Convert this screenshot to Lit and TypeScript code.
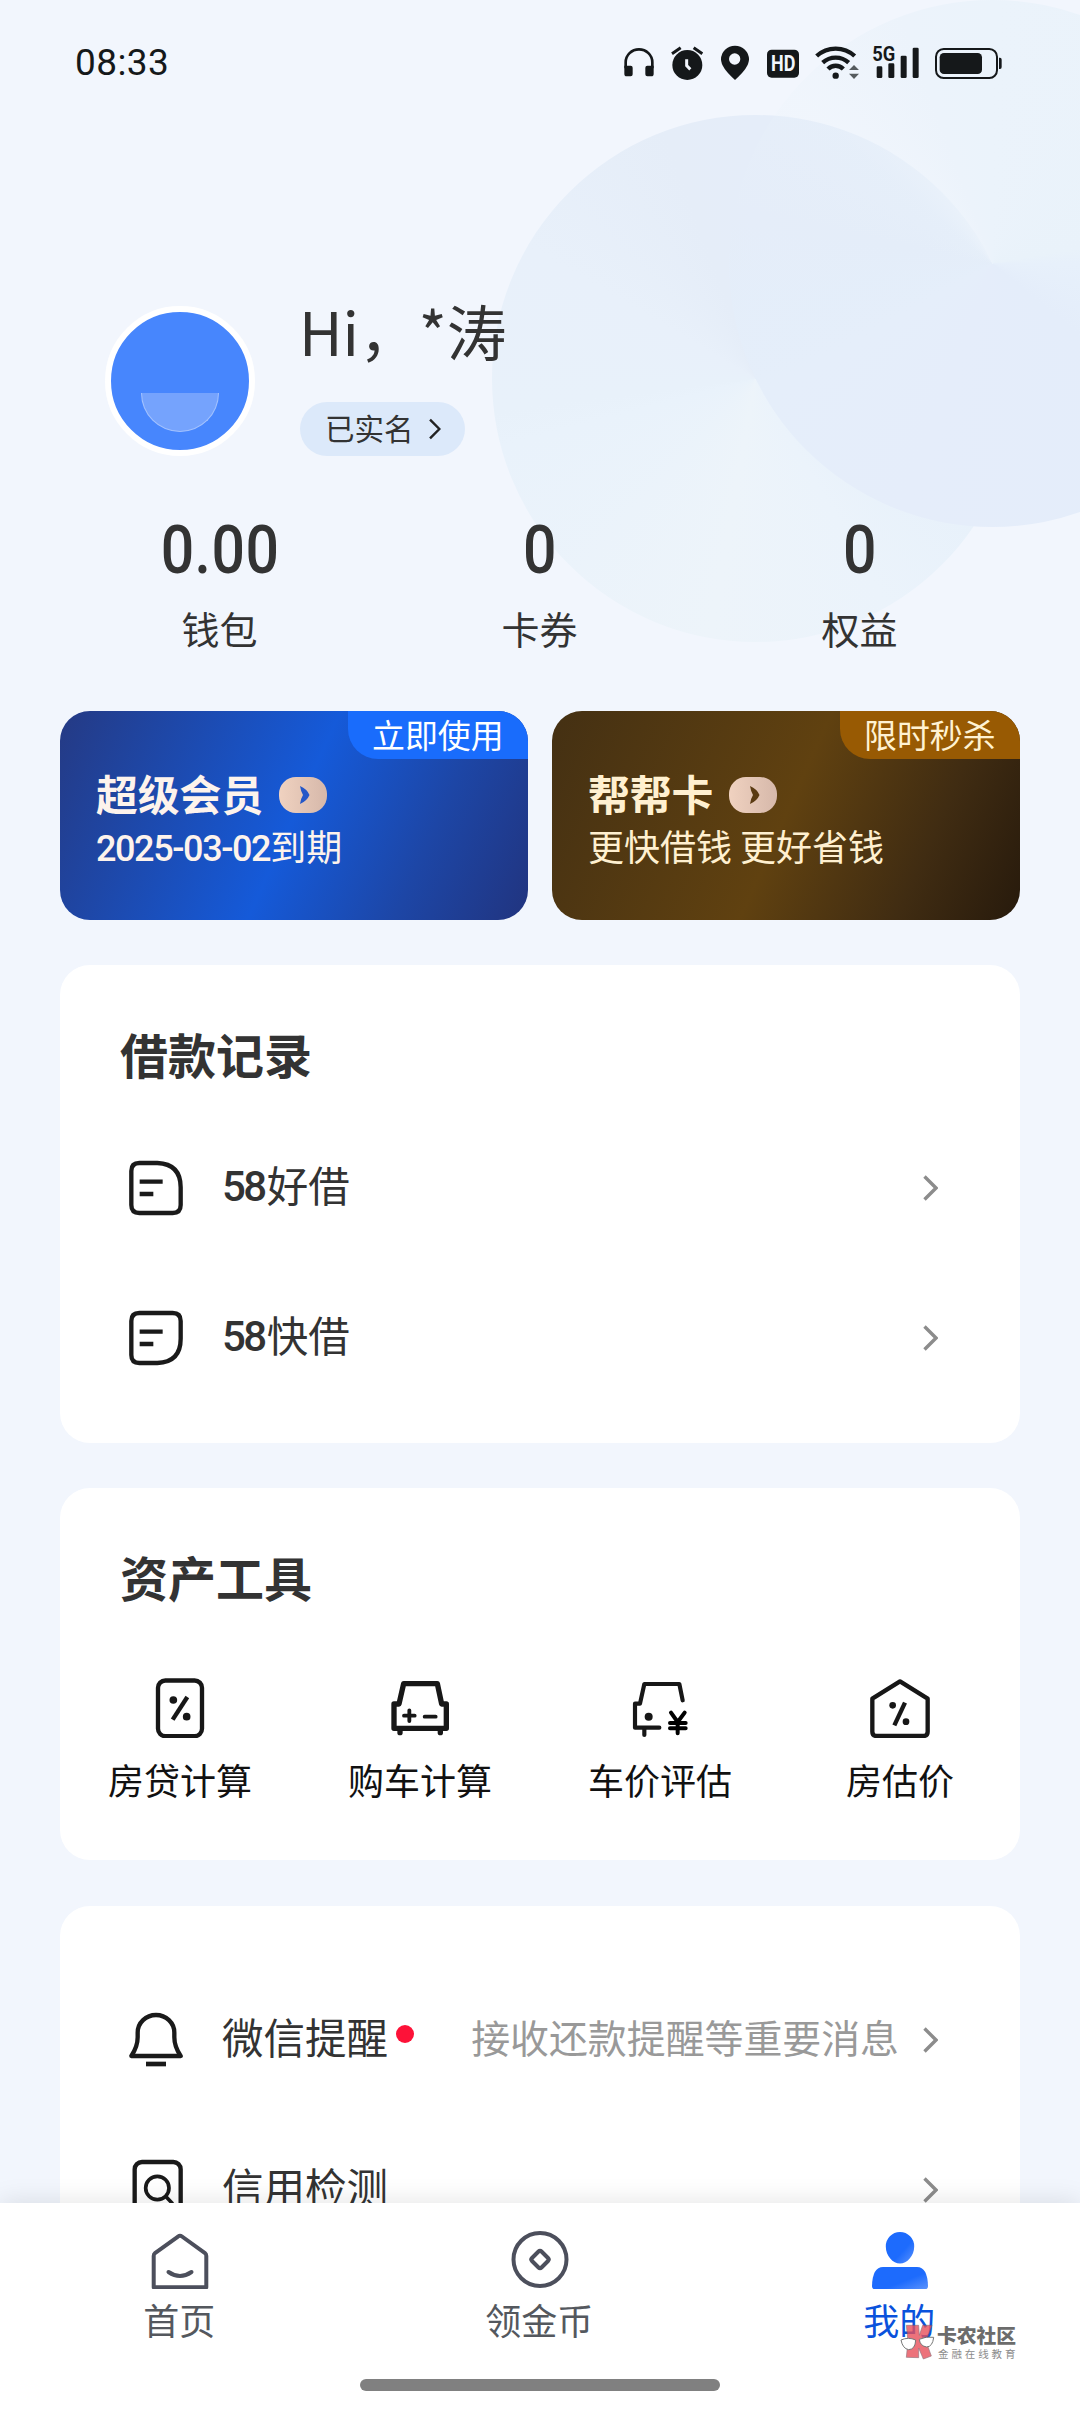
import { LitElement, html, svg, css, TemplateResult } from "lit";
import { customElement, property } from "lit/decorators.js";

const chevron = (cls: string) => html`
  <svg class=${cls} viewBox="0 0 16 26" fill="none" stroke="currentColor">
    <path d="M2.500 1.500 L14 13 L2.500 24.500" />
  </svg>
`;

const docIcon = svg`
  <g fill="none" stroke="#1a1a1a" stroke-width="13">
    <path d="M118 489H172Q242 492 242 562V615Q242 639 218 639H118Q94 639 94 615V513Q94 489 118 489Z"/>
    <path d="M119 545H188M119 582H160"/>
  </g>`;

const docFlipIcon = svg`
  <g fill="none" stroke="#1a1a1a" stroke-width="13">
    <path d="M118 639H172Q242 636 242 566V513Q242 489 218 489H118Q94 489 94 513V615Q94 639 118 639Z"/>
    <path d="M119 545H188M119 582H160"/>
  </g>`;

const bellIcon = svg`
  <g transform="translate(0 384)" fill="none" stroke="#1a1a1a" stroke-width="13" stroke-linejoin="round">
    <path d="M94 228Q113 200 113 172V158A55 53 0 0 1 223 158V172Q223 200 242 228Z"/>
    <path d="M138 252H198" stroke-width="14"/>
  </g>`;

const searchIcon = svg`
  <g transform="translate(0 -66)" fill="none" stroke="#1a1a1a" stroke-width="13">
    <rect x="104" y="546" width="138" height="168" rx="22"/>
    <circle cx="172" cy="624" r="35" stroke-width="11"/>
    <path d="M196 648L218 671" stroke-width="11"/>
  </g>`;

const tools: { label: string; icon: TemplateResult }[] = [
  {
    label: "房贷计算",
    icon: svg`<g fill="none" stroke="#171717" stroke-width="13">
      <rect x="24" y="7.500" width="132" height="167" rx="22"/>
      <path d="M112 57L68 125"/>
      <circle cx="70" cy="66" r="11.500" fill="#171717" stroke="none"/>
      <circle cx="110" cy="116" r="11.500" fill="#171717" stroke="none"/></g>`,
  },
  {
    label: "购车计算",
    icon: svg`<g fill="none" stroke="#171717" stroke-width="16" stroke-linejoin="round" stroke-linecap="round">
      <path d="M12 78H27L41 17H142L155 78H169V151H12Z"/>
      <path d="M30 156V164M151 156V164"/>
      <path d="M42 113H74M58 97V129M104 116H137" stroke-width="11.500"/></g>`,
  },
  {
    label: "车价评估",
    icon: svg`<g fill="none" stroke="#171717" stroke-width="12.500" stroke-linejoin="round" stroke-linecap="round">
      <path d="M158 67L148 18H43L30 77H15V149H88"/>
      <path d="M43 150V171"/>
      <circle cx="56" cy="116" r="12" fill="#171717" stroke="none"/>
      <path d="M123 104L143 132L164 104M143 132V166M120 135H167M120 151H167" stroke="#000" stroke-width="12"/></g>`,
  },
  {
    label: "房估价",
    icon: svg`<g fill="none" stroke="#171717" stroke-width="13" stroke-linejoin="round">
      <path d="M90 10L173 62V161Q173 174 160 174H20Q7 174 7 161V62Z"/>
      <path d="M105 74L73 142"/>
      <circle cx="68" cy="82" r="10" fill="#171717" stroke="none"/>
      <circle cx="108" cy="131" r="10" fill="#171717" stroke="none"/></g>`,
  },
];

@customElement("status-bar")
class StatusBar extends LitElement {
  static styles = css`
    :host {
      display: flex;
      justify-content: space-between;
      height: 124px;
      padding: 0 77px 2px 75px;
      align-items: center;
      color: #15181a;
      font-family: Roboto, sans-serif;
    }
    .time { font-size: 37px; line-height: 44px; letter-spacing: 0.4px; padding-top: 2px; }
    .icons { display: flex; }
    .icons svg { height: 42px; display: block; }
    .w43 { width: 43px; }
    .w48 { width: 48px; }
    .w47 { width: 47px; }
    .w58 { width: 58px; }
    .w64 { width: 64px; }
    .w75 { width: 75px; }
    text { font-family: Roboto, sans-serif; font-weight: 700; }
  `;
  render() {
    return html`
      <div class="time">08:33</div>
      <div class="icons">
        <svg class="w43" viewBox="60 60 129 126">
          <path d="M77 142V124A40 39 0 0 1 157 124V142" fill="none" stroke="currentColor" stroke-width="8"/>
          <path d="M73 134H92Q98 134 98 140V160Q98 166 92 166H80Q73 166 73 158ZM161 134H142Q136 134 136 140V160Q136 166 142 166H154Q161 166 161 158Z" fill="currentColor"/>
        </svg>
        <svg class="w48" viewBox="189 60 144 126">
          <circle cx="262" cy="132" r="45" fill="currentColor"/>
          <path d="M216 98L242 80M281 80L307 98" stroke="currentColor" stroke-width="9"/>
          <path d="M260 115V134L271 145" fill="none" stroke="#f2f6fd" stroke-width="9"/>
        </svg>
        <svg class="w47" viewBox="333 60 141 126">
          <path d="M405 177Q363 140 363 115A42 41 0 0 1 447 115Q447 140 405 177Z" fill="currentColor"/>
          <circle cx="404" cy="114" r="17" fill="#f2f6fd"/>
        </svg>
        <svg class="w48" viewBox="474 60 144 126">
          <rect x="501" y="86" width="96" height="84" rx="14" fill="currentColor"/>
          <text x="513" y="151" font-size="64" textLength="73" lengthAdjust="spacingAndGlyphs" fill="#f2f6fd">HD</text>
        </svg>
        <svg class="w58" viewBox="618 60 174 126">
          <g fill="none" stroke="currentColor" stroke-width="13">
            <path d="M650 105A84 84 0 0 1 764 105"/>
            <path d="M668 125A58 58 0 0 1 746 125"/>
            <path d="M684 144A32 32 0 0 1 730 144"/>
          </g>
          <circle cx="707" cy="164" r="9.5" fill="currentColor"/>
          <path d="M747 147L762 132L777 147ZM747 158L762 174L777 158Z" fill="#555b5e"/>
        </svg>
        <svg class="w64" viewBox="792 60 192 126">
          <text x="817" y="121" font-size="62" textLength="69" lengthAdjust="spacingAndGlyphs" fill="currentColor">5G</text>
          <g fill="currentColor">
            <rect x="830" y="136" width="17" height="35" rx="4"/>
            <rect x="865" y="127" width="18" height="44" rx="4"/>
            <rect x="902" y="104" width="18" height="67" rx="4"/>
            <rect x="938" y="80" width="18" height="91" rx="4"/>
          </g>
        </svg>
        <svg class="w75" viewBox="984 60 225 126">
          <rect x="1008" y="84" width="183" height="87" rx="23" fill="none" stroke="currentColor" stroke-width="6"/>
          <rect x="1019" y="96" width="127" height="63" rx="13" fill="currentColor"/>
          <path d="M1197 110H1200Q1205 110 1205 116V138Q1205 144 1200 144H1197Z" fill="currentColor"/>
        </svg>
      </div>
    `;
  }
}

@customElement("member-card")
class MemberCard extends LitElement {
  @property() heading = "";
  @property() tag = "";
  @property() tone = "blue";
  static styles = css`
    :host { flex: 1; display: block; }
    .card {
      height: 209px;
      border-radius: 30px;
      overflow: hidden;
      display: flex;
      flex-direction: column;
      box-sizing: border-box;
    }
    .blue {
      color: #fdf3ec;
      background: linear-gradient(114deg, #243b87 2%, #155ad9 50%, #1d46a6 76%, #21347f 100%);
      --tag: #196cfc;
      --tagtext: #fff;
      --mark: #2457c8;
    }
    .gold {
      color: #fff0d0;
      background: linear-gradient(114deg, #443013 0%, #604110 50%, #402c12 78%, #271a0c 100%);
      --tag: #985a03;
      --tagtext: #fff2d2;
      --mark: #5b3b12;
    }
    .tag {
      align-self: flex-end;
      width: 180px;
      height: 48px;
      box-sizing: border-box;
      padding-left: 24px;
      font-size: 32.9px;
      line-height: 45px;
      white-space: nowrap;
      border-bottom-left-radius: 30px;
      background: var(--tag);
      color: var(--tagtext);
    }
    .title {
      display: flex;
      align-items: center;
      gap: 16px;
      height: 50px;
      margin-top: 11px;
      padding-left: 36px;
      font-size: 41.8px;
      line-height: 50px;
      font-weight: 700;
    }
    .title span { padding-bottom: 5px; }
    .pill { width: 48px; height: 36px; }
    .desc {
      padding-left: 36px;
      font-size: 36px;
      line-height: 50px;
      white-space: nowrap;
    }
  `;
  render() {
    return html`
      <div class="card ${this.tone}">
        <div class="tag">${this.tag}</div>
        <div class="title">
          <span>${this.heading}</span>
          <svg class="pill" viewBox="0 0 48 36">
            <defs>
              <linearGradient id="g"><stop offset="0" stop-color="#f0d2c0"/><stop offset="1" stop-color="#d6b8aa"/></linearGradient>
            </defs>
            <rect width="48" height="36" rx="17" fill="url(#g)"/>
            <path d="M21 9Q28 12 30.5 18Q28 24 21 27Q22 21 24 18Q22 15 21 9Z" fill="var(--mark)"/>
          </svg>
        </div>
        <div class="desc"><slot></slot></div>
      </div>
    `;
  }
}

@customElement("tab-bar")
class TabBar extends LitElement {
  static styles = css`
    :host {
      display: grid;
      grid-template-columns: repeat(3, 360px);
      grid-template-rows: 176px 12px;
      height: 209px;
      background: #fff;
      box-shadow: 0 -2px 24px rgba(0, 0, 0, 0.1);
    }
    .tab {
      display: flex;
      flex-direction: column;
      align-items: center;
      padding-top: 26px;
      color: #54585e;
      font-size: 36px;
      line-height: 50px;
    }
    .tab svg { width: 60px; height: 60px; margin-bottom: 5px; }
    .tab span { padding-right: 1.5px; }
    .on { color: #0a52dc; }
    .handle {
      grid-column: 2;
      height: 12px;
      border-radius: 6px;
      background: #808080;
    }
  `;
  render() {
    return html`
      <div class="tab">
        <svg viewBox="150 2229 60 60" fill="none" stroke="#4c4f5c" stroke-width="4" stroke-linejoin="round" stroke-linecap="round">
          <path d="M178 2236.5Q180 2235 182 2236.5L205 2253Q206.300 2254 206.300 2256V2287.200H153.700V2256Q153.700 2254 155 2253Z"/>
          <path d="M168.500 2272Q180 2280 191.500 2272"/>
        </svg>
        <span>首页</span>
      </div>
      <div class="tab">
        <svg viewBox="510 2229 60 60" fill="none" stroke="#4c4f5c" stroke-width="4" stroke-linejoin="round">
          <circle cx="540" cy="2259.500" r="26.500"/>
          <path d="M538.500 2251.500Q540 2250 541.500 2251.500L548 2258Q549.500 2259.500 548 2261L541.500 2267.500Q540 2269 538.500 2267.500L532 2261Q530.500 2259.500 532 2258Z"/>
        </svg>
        <span>领金币</span>
      </div>
      <div class="tab on">
        <svg viewBox="870 2229 60 60">
          <defs>
            <linearGradient id="p" x1="0" y1="0" x2="1" y2="1">
              <stop offset="0.600" stop-color="#1d6bfd"/><stop offset="1" stop-color="#5c93fc"/>
            </linearGradient>
          </defs>
          <path d="M900 2232A14.200 14.200 0 0 1 914.200 2246.500C914.200 2256 907 2263.500 900 2263.500S885.800 2256 885.800 2246.500A14.200 14.200 0 0 1 900 2232Z" fill="url(#p)"/>
          <path d="M883 2267H917Q927.500 2267 928 2286Q928 2289.300 925 2289.300H875Q872 2289.300 872 2286Q872.500 2267 883 2267Z" fill="url(#p)"/>
        </svg>
        <span>我的</span>
      </div>
      <div class="handle"></div>
    `;
  }
}

@customElement("app-root")
class AppRoot extends LitElement {
  static styles = css`
    :host {
      display: block;
      position: relative;
      width: 1080px;
      height: 2412px;
      overflow: hidden;
      background: #f2f6fd;
      color: #333;
      font-family: "Noto Sans CJK SC", sans-serif;
    }
    .disc {
      position: absolute;
      width: 527px;
      height: 527px;
      border-radius: 50%;
    }
    .disc-a {
      left: 492px;
      top: 115px;
      background: conic-gradient(#e5edf9 0deg, #e4edf9 50deg, #e6f0fa 110deg, #ebf3fb 150deg, #edf4fa 190deg, #e9f2fb 255deg, #e8f1fa 263deg, #e8f0fa 300deg, #e5edf8 340deg, #e5edf9 360deg);
    }
    .disc-b {
      left: 729px;
      top: 0;
      background: conic-gradient(#ebf3fb 0deg, #e9f2fa 80deg, #e7f0fb 90deg, #e4edfa 130deg, #e5edfa 200deg, #e5eefa 240deg, #e4eefab0 262deg, #e5eff900 280deg, #eaf3fa40 310deg, #ecf3fb 340deg, #ebf3fb 360deg);
    }
    .page { position: relative; display: flex; flex-direction: column; }
    .profile { display: flex; padding: 180px 0 0 105px; gap: 45px; height: 150px; }
    .avatar {
      box-sizing: border-box;
      width: 150px;
      height: 150px;
      border: 6px solid #fff;
      border-radius: 50%;
      background: #4786fd;
      display: flex;
      justify-content: center;
    }
    .smile {
      margin-top: 81px;
      box-sizing: border-box;
      width: 78px;
      height: 39px;
      border-radius: 0 0 39px 39px;
      background: #75a3fd;
      border: 1.5px solid #a3c2fe;
      border-top: none;
    }
    .who { display: flex; flex-direction: column; align-items: flex-start; }
    .hi { font-size: 59.8px; line-height: 48px; height: 60px; margin-left: -1px; white-space: nowrap; }
    .verified {
      margin-top: 36px;
      width: 165px;
      height: 54px;
      box-sizing: border-box;
      padding: 0 24px 0 25px;
      border-radius: 27px;
      background: #dce9fa;
      display: flex;
      align-items: center;
      justify-content: space-between;
      font-size: 29.5px;
      line-height: 50px;
    }
    .verified span { padding-bottom: 4px; }
    .go-s { width: 13px; height: 22px; stroke-width: 3; color: #222; }
    .stats { display: grid; grid-template-columns: repeat(3, 1fr); padding: 62px 60px 0; text-align: center; }
    .num {
      font: 500 67px/64px Roboto, sans-serif;
      transform: scaleX(0.88);
      letter-spacing: 0.5px;
    }
    .stat { font-size: 38px; line-height: 50px; margin: 21px 1px 2px 0; }
    .members { display: flex; gap: 24px; padding: 56px 60px 0; }
    .din { font-family: Roboto, sans-serif; font-weight: 500; letter-spacing: -1.4px; }
    .panel {
      margin: 45px 60px 0;
      border-radius: 30px;
      background: #fff;
      box-sizing: border-box;
    }
    .loans { height: 478px; padding-top: 58px; }
    .assets { height: 372px; padding-top: 58px; }
    .more { height: 600px; padding-top: 59px; margin-top: 46px; }
    .heading { margin: 0; padding-left: 60px; font-size: 48px; line-height: 60px; font-weight: 700; }
    .loans .heading { margin-bottom: 30px; }
    .row {
      display: flex;
      align-items: center;
      height: 150px;
      padding: 0 82px 0 69px;
      font-size: 41.5px;
      line-height: 60px;
      white-space: nowrap;
    }
    .row span { padding-bottom: 8px; }
    .row-icon { width: 54px; height: 54px; margin-right: 39px; overflow: visible; }
    .row .din { font-size: 42px; letter-spacing: -2.5px; margin-right: 2px; padding-bottom: 3px; }
    .dot { width: 18px; height: 18px; border-radius: 50%; background: #fd1238; margin: 0 0 12px 8px; }
    .hint { margin-left: auto; margin-right: 23px; color: #999; font-size: 38.9px; }
    .go { width: 16px; height: 26px; stroke-width: 3.4; color: #8c8c8c; }
    .push { margin-left: auto; }
    .tools { display: grid; grid-template-columns: repeat(4, 1fr); margin-top: 72px; color: #111; }
    .tool { display: flex; flex-direction: column; align-items: center; font-size: 36px; line-height: 50px; }
    .tool svg { width: 60px; height: 60px; margin-bottom: 16px; }
    .tabs { position: absolute; left: 0; right: 0; bottom: 0; }
    .stamp {
      position: absolute;
      left: 900px;
      top: 2324px;
      display: flex;
      gap: 2px;
      color: #6c6c6c;
    }
    .stamp svg { width: 35px; height: 37px; opacity: 0.8; }
    .stamp-name { font-size: 19.8px; line-height: 22px; font-weight: 900; white-space: nowrap; }
    .stamp-sub { font-size: 10.5px; line-height: 15px; letter-spacing: 2.9px; color: #8c8c8c; white-space: nowrap; padding-left: 1px; }
  `;

  private row(icon: TemplateResult, content: TemplateResult, hint?: string) {
    return html`
      <div class="row">
        <svg class="row-icon" viewBox="87 483 162 162">${icon}</svg>
        ${content}
        ${hint ? html`<span class="hint">${hint}</span>` : html`<span class="push"></span>`}
        ${chevron("go")}
      </div>
    `;
  }

  render() {
    return html`
      <div class="disc disc-a"></div>
      <div class="disc disc-b"></div>
      <div class="page">
        <status-bar></status-bar>
        <div class="profile">
          <div class="avatar"><div class="smile"></div></div>
          <div class="who">
            <div class="hi">Hi，*涛</div>
            <div class="verified"><span>已实名</span>${chevron("go-s")}</div>
          </div>
        </div>
        <div class="stats">
          ${[["0.00", "钱包"], ["0", "卡券"], ["0", "权益"]].map(
            ([n, l]) => html`<div><div class="num">${n}</div><div class="stat">${l}</div></div>`
          )}
        </div>
        <div class="members">
          <member-card heading="超级会员" tag="立即使用" tone="blue"><span class="din">2025-03-02</span>到期</member-card>
          <member-card heading="帮帮卡" tag="限时秒杀" tone="gold">更快借钱 更好省钱</member-card>
        </div>
        <section class="panel loans">
          <h2 class="heading">借款记录</h2>
          ${this.row(docIcon, html`<span class="din">58</span><span>好借</span>`)}
          ${this.row(docFlipIcon, html`<span class="din">58</span><span>快借</span>`)}
        </section>
        <section class="panel assets">
          <h2 class="heading">资产工具</h2>
          <div class="tools">
            ${tools.map((t) => html`<div class="tool"><svg viewBox="0 0 180 180">${t.icon}</svg>${t.label}</div>`)}
          </div>
        </section>
        <section class="panel more">
          ${this.row(bellIcon, html`<span>微信提醒</span><i class="dot"></i>`, "接收还款提醒等重要消息")}
          ${this.row(searchIcon, html`<span>信用检测</span>`)}
        </section>
      </div>
      <tab-bar class="tabs"></tab-bar>
      <div class="stamp">
        <svg viewBox="0 0 105 111">
          <path d="M19 4H56L58 34L68 4H96L78 52L94 96L70 105L56 72V101L19 100L24 52Z" fill="#e8505b" stroke="#7a5560" stroke-width="2"/>
          <path d="M3 48Q25 38 47 48Q46 76 26 77Q8 74 3 48ZM58 46Q78 36 101 40Q98 68 80 69Q60 66 58 46Z" fill="#fff" stroke="#555" stroke-width="3"/>
        </svg>
        <div>
          <div class="stamp-name">卡农社区</div>
          <div class="stamp-sub">金融在线教育</div>
        </div>
      </div>
    `;
  }
}
